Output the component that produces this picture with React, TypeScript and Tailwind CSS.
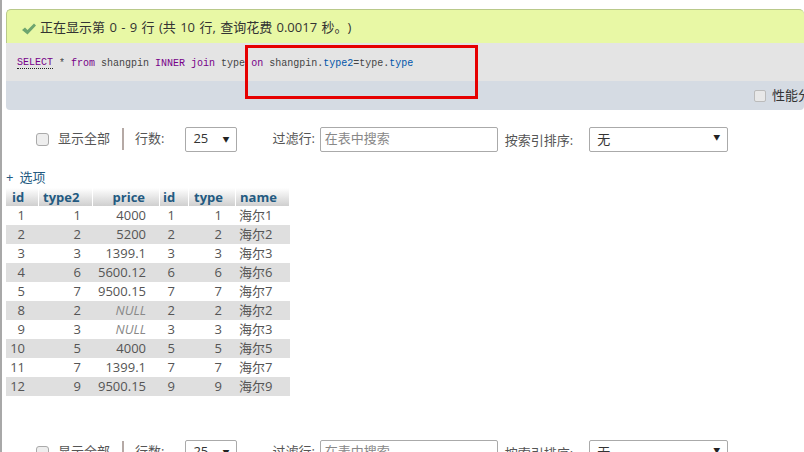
const font = "font-['Open_Sans','Noto_Sans_CJK_SC',sans-serif]";

const rows = [
  ["1", "1", "4000", "1", "1", "海尔1"],
  ["2", "2", "5200", "2", "2", "海尔2"],
  ["3", "3", "1399.1", "3", "3", "海尔3"],
  ["4", "6", "5600.12", "6", "6", "海尔6"],
  ["5", "7", "9500.15", "7", "7", "海尔7"],
  ["8", "2", "NULL", "2", "2", "海尔2"],
  ["9", "3", "NULL", "3", "3", "海尔3"],
  ["10", "5", "4000", "5", "5", "海尔5"],
  ["11", "7", "1399.1", "7", "7", "海尔7"],
  ["12", "9", "9500.15", "9", "9", "海尔9"],
];

const headerPad = ["pl-[6px] text-left", "pl-[4px] text-left", "pr-[14px] text-right", "pl-[3px] text-left", "pl-[5px] text-left", "pl-[4px] text-left"];

function Caret() {
  return <span className="text-[7px] leading-none text-[#222]">▼</span>;
}

function Navigation() {
  return (
    <div className="flex h-[36px] items-center text-[13px] text-[#555]">
      <span className="ml-[30px] h-[13px] w-[13px] rounded-[3px] border border-[#aaa] bg-[#eee]" />
      <span className="ml-[9px]">显示全部</span>
      <span className="ml-[12px] h-[22px] w-[2px] bg-[#b5a9a5]" />
      <span className="ml-[11px]">行数:</span>
      <div className="ml-[21px] flex h-[25px] w-[52px] items-center justify-between rounded-[2px] border border-[#aaa] bg-white pl-[7px] pr-[7px] text-[#333]">
        <span>25</span>
        <Caret />
      </div>
      <span className="ml-[35px]">过滤行:</span>
      <div className="ml-[5px] flex h-[25px] w-[178px] items-center rounded-[2px] border border-[#aaa] bg-white pl-[4px] text-[#888]">在表中搜索</div>
      <span className="ml-[7px] mt-[3px]">按索引排序:</span>
      <div className="ml-[16px] flex h-[25px] w-[139px] items-center justify-between rounded-[2px] border border-[#aaa] bg-white pl-[7px] pr-[7px] text-[#333]">
        <span className="mt-[2px]">无</span>
        <span className="mb-[4px] flex"><Caret /></span>
      </div>
    </div>
  );
}

export default function App() {
  return (
    <div className={`relative flex h-[452px] w-[804px] overflow-hidden bg-white ${font}`}>
      <div className="w-[2px] shrink-0 bg-[#a8a8a8]" />
      <div className="min-w-0 flex-1 pl-[4px] pt-[9px]">
        <div className="flex h-[34px] items-center rounded-t-[5px] border-t border-l border-[#b9c98a] bg-[#e8f8a5] pl-[14px] pt-[3px] text-[13px] text-[#333] [text-spacing-trim:space-all] [word-spacing:1px]">
          <svg width="16" height="12" viewBox="0 0 16 12" className="mr-[3px] mt-[2px]">
            <path d="M1 7 L4 4.5 L6.5 7 L13 0.5 L15 2.5 L6.5 11.5 Z" fill="#6da56f" />
          </svg>
          正在显示第 0 - 9 行 (共 10 行, 查询花费 0.0017 秒。)
        </div>
        <div className="flex h-[38px] items-center whitespace-pre bg-[#e4e4e4] pl-[11px] pt-[2px] font-['Liberation_Mono',monospace] text-[10px] text-[#444]">
          <span className="border-b border-dotted border-[#222] leading-[11px] text-[#708]">SELECT</span>
          <span> * </span>
          <span className="text-[#708]">from</span>
          <span> shangpin </span>
          <span className="text-[#708]">INNER</span>
          <span> </span>
          <span className="text-[#708]">join</span>
          <span> type </span>
          <span className="text-[#708]">on</span>
          <span> shangpin.</span>
          <span className="text-[#05a]">type2</span>
          <span>=type.</span>
          <span className="text-[#05a]">type</span>
        </div>
        <div className="flex h-[29px] items-center justify-start rounded-b-[4px] bg-[#d5dbe3] pl-[748px] pt-[1px] text-[13px] whitespace-nowrap text-[#333]">
          <span className="mr-[6px] h-[12px] w-[12px] shrink-0 rounded-[2px] border border-[#bbb] bg-[#e8e8e8]" />
          性能分析
        </div>
        <div className="mt-[11px]">
          <Navigation />
        </div>
        <div className="mb-[2px] mt-[11px] flex gap-[6px] text-[13px] leading-[18px] text-[#235a81]">
          <span>+</span>
          <span>选项</span>
        </div>
        <table className="w-[284px] table-fixed border-separate border-spacing-0 text-[13px] leading-[19px] text-[#555]">
          <colgroup>
            <col className="w-[33px]" />
            <col className="w-[54px]" />
            <col className="w-[67px]" />
            <col className="w-[29px]" />
            <col className="w-[47px]" />
            <col className="w-[54px]" />
          </colgroup>
          <thead>
            <tr className="h-[18px]">
              {["id", "type2", "price", "id", "type", "name"].map((name, i) => (
                <th
                  key={i}
                  className={`h-[18px] border-r border-white bg-gradient-to-b from-white to-[#cfcfcf] p-0 leading-[18px] font-bold text-[#235a81] ${headerPad[i]}`}
                >
                  {name}
                </th>
              ))}
            </tr>
          </thead>
          <tbody>
            {rows.map((row, i) => (
              <tr key={i} className={`h-[19px] ${i % 2 === 1 ? "bg-[#dfdfdf]" : "bg-white"}`}>
                <td className="h-[19px] p-0 pr-[14px] text-right">{row[0]}</td>
                <td className="h-[19px] p-0 pr-[12px] text-right">{row[1]}</td>
                <td className={`h-[19px] p-0 pr-[14px] text-right ${row[2] === "NULL" ? "text-[#888] italic" : ""}`}>{row[2]}</td>
                <td className="h-[19px] p-0 pr-[14px] text-right">{row[3]}</td>
                <td className="h-[19px] p-0 pr-[14px] text-right">{row[4]}</td>
                <td className="h-[19px] p-0 pl-[3px]">{row[5]}</td>
              </tr>
            ))}
          </tbody>
        </table>
        <div className="mt-[38px]">
          <Navigation />
        </div>
      </div>
      <div className="absolute left-[245px] top-[45px] h-[54px] w-[233px] border-[3px] border-[#e60000]" />
    </div>
  );
}
